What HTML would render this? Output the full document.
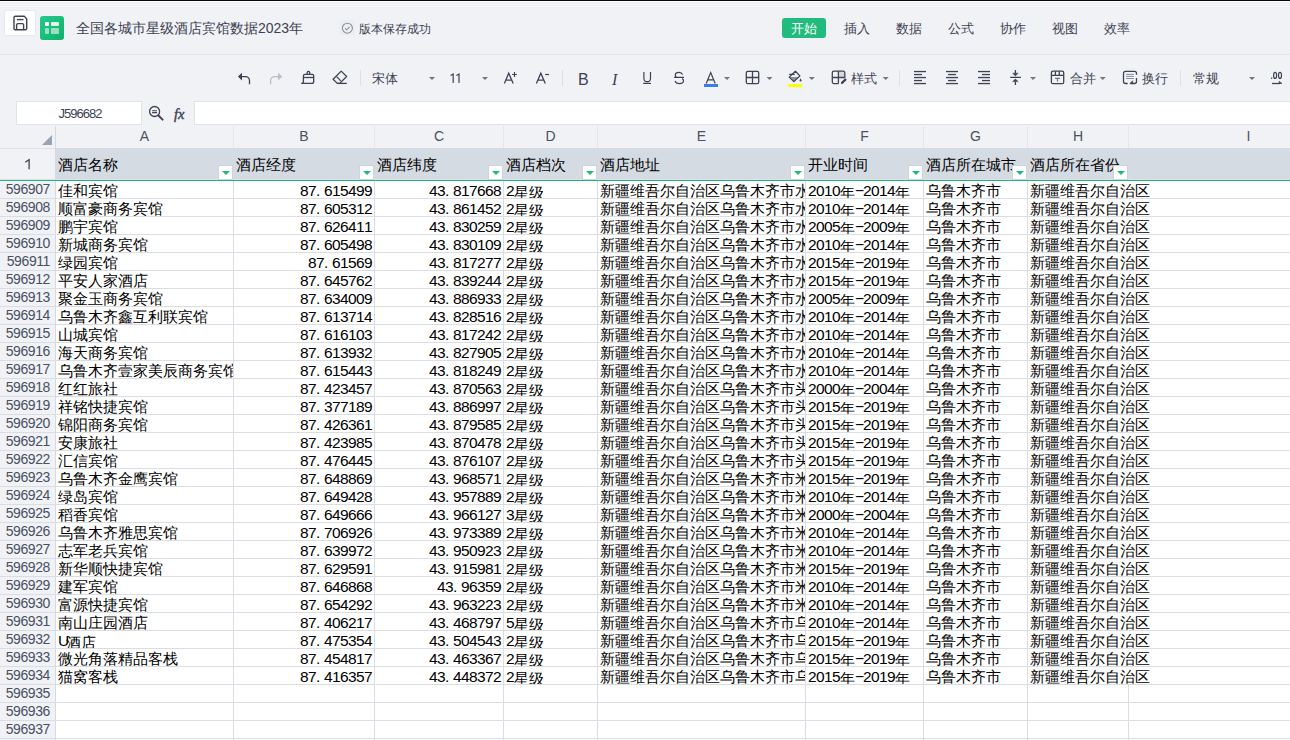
<!DOCTYPE html>
<html><head><meta charset="utf-8"><style>
*{margin:0;padding:0;box-sizing:border-box}
html,body{width:1290px;height:740px;overflow:hidden}
body{position:relative;background:#f1f2f6;font-family:"Liberation Sans",sans-serif;color:#3d4352}
.abs{position:absolute}
#topline{position:absolute;left:0;top:0;width:1290px;height:1px;background:#080808}
#topline2{position:absolute;left:0;top:1px;width:1290px;height:1px;background:#fff}
#savebtn{position:absolute;left:4px;top:10px;width:32px;height:26px;background:#fff;border:1px solid #e6e8ed;border-radius:3px}
#logo{position:absolute;left:40px;top:16px;width:24px;height:24px;border-radius:3px;background:linear-gradient(135deg,#25c98a,#10b06c)}
#title{position:absolute;left:76px;top:18px;font-size:14px;line-height:20px;color:#3b4150;white-space:nowrap}
#status{position:absolute;left:359px;top:20px;font-size:12px;line-height:18px;color:#3d4352;white-space:nowrap}
.tab{position:absolute;top:18px;height:20px;font-size:12.5px;line-height:22px;color:#3d4352;white-space:nowrap}
.tab.on{background:#21bc7d;color:#fff;border-radius:3px;width:44px;text-align:center;line-height:23px}
#sep1{position:absolute;left:0;top:54px;width:1290px;height:1px;background:#e1e4ea}
.tb{position:absolute;top:71px}
.tt{position:absolute;top:70px;font-size:12.5px;line-height:19px;color:#3d4352;white-space:nowrap}
.dd{position:absolute;top:77px;width:0;height:0;border-left:4px solid transparent;border-right:4px solid transparent;border-top:4px solid #8c929e}
.vsep{position:absolute;top:70px;width:1px;height:16px;background:#dde0e6}
#namebox{position:absolute;left:16px;top:101px;width:126px;height:24px;background:#fff;border:1px solid #dfe3ea;font-size:13px;line-height:23px;text-align:center;color:#3d4352;padding-left:2px;letter-spacing:-1px}
#fbox{position:absolute;left:194px;top:101px;width:1100px;height:24px;background:#fff;border:1px solid #dfe3ea}
#fx{position:absolute;left:174px;top:105px;font-family:"Liberation Serif",serif;font-style:italic;font-size:14.5px;line-height:18px;color:#3d4352;-webkit-text-stroke:0.4px #3d4352}
#grid{position:absolute;left:0;top:0;width:1290px;height:740px}
#colhbar{position:absolute;left:0;top:125px;width:1290px;height:23px;background:#f1f2f6}
.colh{position:absolute;top:125px;height:23px;font-size:14px;line-height:23px;text-align:center;color:#4b5160}
.colsep{position:absolute;top:126px;width:1px;height:22px;background:#e3e6eb}
#hrow{position:absolute;left:56px;top:148px;width:1234px;height:31px;background:#d5dbe3}
#hrowl{position:absolute;left:0;top:179px;width:1290px;height:1px;background:#e2dfea}
#green{position:absolute;left:0;top:180px;width:1290px;height:1px;background:#21b67a}
#white{position:absolute;left:56px;top:181px;width:1234px;height:559px;background:#fff}
#rhcol{position:absolute;left:0;top:148px;width:55px;height:592px;background:#f1f2f6}
#rhline{position:absolute;left:55px;top:126px;width:1px;height:614px;background:#d5d9e0}
#rh1{position:absolute;left:0;top:149px;width:55px;height:31px;font-size:14px;line-height:31px;text-align:center;color:#3d4352}
#corner{position:absolute;left:42px;top:135px;width:0;height:0;border-left:10px solid transparent;border-bottom:10px solid #9aa3b1}
.hc{position:absolute;top:153px;height:26px;font-family:"Liberation Mono",monospace;font-size:15px;line-height:28px;color:#000;padding-left:2px;white-space:nowrap;overflow:hidden}
.hsep{display:none}
.fb{position:absolute;top:166px;width:13px;height:13px;background:#fff;box-shadow:0 0 0 1px #cfd4dc}
.fb i{position:absolute;left:2.5px;top:5px;width:0;height:0;border-left:4px solid transparent;border-right:4px solid transparent;border-top:4px solid #22b97a}
.hl{position:absolute;left:0;width:1290px;height:1px;background:#dadde3}
.vl{position:absolute;width:1px;background:#dadde3}
.rh{position:absolute;left:0;width:55px;height:17px;font-size:14px;line-height:16px;text-align:right;padding-right:5px;color:#485061;letter-spacing:-0.4px}
.c{position:absolute;height:17px;font-family:"Liberation Mono",monospace;font-size:15px;line-height:17px;color:#000;white-space:nowrap;padding:3px 2px 0}
.c.clip{overflow:hidden}
.c.r{text-align:right}
b{display:inline-block;width:8px;text-align:left;font-weight:normal;font-family:"Liberation Sans",sans-serif;font-size:15.5px;position:relative;top:-2px}

</style></head><body>
<div id="topline"></div><div id="topline2"></div>
<div id="savebtn"></div>
<svg class="abs" style="left:0;top:0" width="1290" height="125" viewBox="0 0 1290 125" fill="none" stroke="#3d4352" stroke-width="1.3">
<!-- save icon -->
<path d="M14 17.5a1.2 1.2 0 0 1 1.2-1.2h9l2.5 2.5v9.7a1.2 1.2 0 0 1-1.2 1.2H15.2a1.2 1.2 0 0 1-1.2-1.2z" stroke-width="1.4"/>
<path d="M17 19.6h6.5" stroke-width="1.4"/>
<path d="M16.6 29.5v-4.6a1.3 1.3 0 0 1 1.3-1.3h4.4a1.3 1.3 0 0 1 1.3 1.3v4.6" stroke-width="1.4"/>
<!-- status check -->
<rect x="339.5" y="20" width="15.5" height="15.5" rx="2" fill="#eceef2" stroke="none"/>
<circle cx="347.4" cy="28.2" r="5" stroke="#8a909c" stroke-width="1.1"/>
<path d="M345 28.3l1.6 1.5 2.9-2.9" stroke="#8a909c" stroke-width="1.1"/>
<!-- undo / redo -->
<path d="M241.5 76.6H245.5A4 4 0 0 1 249.5 80.6V84.2"/>
<path d="M237.9 76.6L242 72.8V80.4Z" fill="#3d4352" stroke="none"/>
<path d="M278.6 76.6H274.6A4 4 0 0 0 270.6 80.6V84.2" stroke="#b9bdc6"/>
<path d="M282.2 76.6L278.1 72.8V80.4Z" fill="#b9bdc6" stroke="none"/>
<!-- brush -->
<path d="M307.2 74.4V72.6a1.25 1.25 0 0 1 2.5 0V74.4"/>
<path d="M301.2 83.4H311.7a2 2 0 0 0 2-2V75.9a1.5 1.5 0 0 0-1.5-1.5H304.9a1.5 1.5 0 0 0-1.5 1.5V81.4a2 2 0 0 1-2.2 2"/>
<path d="M303.4 77.5H313.7"/>
<!-- eraser -->
<path d="M337.3 83.4L333.1 79.2L341.2 71.1L346.6 76.5L339.7 83.4Z" stroke-linejoin="round"/>
<path d="M336.6 76.6L340.8 80.9"/>
<path d="M337.3 83.4H346.8"/>
<path d="M450.6 75.6L453.2 74V83.1M456.4 75.6L459 74V83.1" stroke-width="1.2"/>
<!-- A+ A- -->
<path d="M504.4 83.6L508.7 73.2L513.2 83.6M506 80.1H511.6" stroke-width="1.3"/>
<path d="M512.1 74.5H516.9M514.5 72.1V76.9" stroke-width="1.2"/>
<path d="M536.4 83.6L540.8 73.2L545.3 83.6M538 80.1H543.7" stroke-width="1.3"/>
<path d="M545.2 74.5H549.1" stroke-width="1.2"/>
<path d="M643.9 72.1V78.2a3.3 3.5 0 0 0 6.6 0V72.1M643.2 83.4H650.9" stroke-width="1.2"/>
<path d="M682.6 74.6C681.9 73 680.6 72.3 679.1 72.3C677 72.3 675.3 73.5 675.3 75C675.3 76 675.8 76.8 676.6 77.3M682.2 78.4C683 79 683.5 80 683.5 80.8C683.5 82.5 681.7 83.6 679.3 83.6C677.2 83.6 675.6 82.6 675 81M674 77.3H684" stroke-width="1.2"/>
<!-- font color A -->
<path d="M706.2 83.4L710.7 72.5L715.2 83.4M707.9 79.8H713.5" stroke-width="1.2"/>
<rect x="704" y="84" width="14" height="3" fill="#3b7bf0" stroke="none"/>
<!-- border grid -->
<rect x="746.3" y="71.4" width="12.4" height="12.3" rx="1.5"/>
<path d="M752.5 71.4V83.7M746.3 77.5H758.7"/>
<!-- bucket -->
<path d="M789.6 76.9H799.4L793.9 81.6Z" fill="#8a93a2" stroke="none"/>
<path d="M795.4 71.2L799.9 75.9L793.9 81.6L789.2 77.1Z" stroke-linejoin="round"/>
<path d="M789.2 74.4H794.7"/>
<path d="M800.6 78.2L799.5 80.4a1.1 1.1 0 0 0 2.2 0Z" fill="#3d4352" stroke="none"/>
<rect x="788" y="84" width="14" height="3" fill="#ffff00" stroke="none"/>
<!-- styles -->
<rect x="839" y="72" width="5.2" height="5" fill="#d5d9e0" stroke="none"/>
<path d="M838.4 83.6H833.8a1.5 1.5 0 0 1-1.5-1.5V72.7a1.5 1.5 0 0 1 1.5-1.5H843.3a1.5 1.5 0 0 1 1.5 1.5V77.5H832.3M838.4 71.2V83.6"/>
<path d="M842 82.9L845.4 79.6" stroke-width="2.2" stroke-linecap="round"/>
<!-- align -->
<g fill="#3d4352" stroke="none">
<rect x="914" y="70.9" width="12" height="1.3"/><rect x="914" y="73.9" width="8" height="1.3"/><rect x="914" y="76.9" width="12" height="1.3"/><rect x="914" y="79.9" width="8" height="1.3"/><rect x="914" y="82.9" width="12" height="1.3"/>
<rect x="946" y="70.9" width="12" height="1.3"/><rect x="948" y="73.9" width="8" height="1.3"/><rect x="946" y="76.9" width="12" height="1.3"/><rect x="948" y="79.9" width="8" height="1.3"/><rect x="946" y="82.9" width="12" height="1.3"/>
<rect x="978" y="70.9" width="12" height="1.3"/><rect x="982" y="73.9" width="8" height="1.3"/><rect x="978" y="76.9" width="12" height="1.3"/><rect x="982" y="79.9" width="8" height="1.3"/><rect x="978" y="82.9" width="12" height="1.3"/>
</g>
<!-- valign -->
<path d="M1010.2 77.4H1020.9M1015.4 70V73.5M1015.4 81.3V85"/>
<path d="M1012.6 73.2H1018.2L1015.4 75.9Z M1012.6 81.6H1018.2L1015.4 78.9Z" fill="#3d4352" stroke="#3d4352" stroke-width="0.5" stroke-linejoin="round"/>
<!-- merge -->
<rect x="1051.4" y="71.2" width="12.3" height="12.5" rx="1.5"/>
<path d="M1051.4 75.4H1063.7M1055.4 71.2V75.4M1059.3 71.2V75.4"/>
<path d="M1055.1 78.3H1060M1057.5 78.3V81.6" stroke="#6f7582" stroke-width="1.2"/>
<!-- wrap -->
<path d="M1136.5 74.8V73.4a2 2 0 0 0-2-2H1125.5a2 2 0 0 0-2 2V81.5a2 2 0 0 0 2 2H1127.7M1136.5 78V81.5a2 2 0 0 1-2 2H1131"/>
<path d="M1129.8 83.6L1132.6 80.9V83.6Z" fill="#3d4352" stroke="#3d4352" stroke-width="0.8"/>
<path d="M1126.1 74.4H1133.9M1126.1 76.4H1133.9M1126.1 78.5H1133.9" stroke="#8a909c" stroke-width="1"/>
<!-- .00 -->
<circle cx="1271.6" cy="78.3" r="0.8" fill="#3d4352" stroke="none"/>
<ellipse cx="1275.1" cy="75.4" rx="1.5" ry="3" stroke-width="1.2"/>
<ellipse cx="1280" cy="75.4" rx="1.5" ry="3" stroke-width="1.2"/>
<path d="M1272 83.5H1280"/>
<path d="M1279.2 81.3L1282 83.5H1279.2Z" fill="#3d4352" stroke="#3d4352" stroke-width="0.6"/>
<!-- magnifier -->
<circle cx="154.6" cy="111.5" r="5"/>
<path d="M152.1 110.75H157M152.1 112.6H157" stroke-width="1.1"/>
<path d="M158.7 115.8L162.6 119.6" stroke-width="2" stroke-linecap="round"/>
<!-- separators -->
<path d="M360.5 70V86M562.5 70V86M899.5 70V86M1180.5 70V86" stroke="#dde0e6" stroke-width="1"/>
<!-- dropdown triangles -->
<g fill="#70757f" stroke="none">
<path d="M429 77H435L432 80Z"/><path d="M482 77H488L485 80Z"/><path d="M724 77H730L727 80Z"/><path d="M766.5 77H772.5L769.5 80Z"/>
<path d="M808.8 77H814.8L811.8 80Z"/><path d="M882.7 77H888.7L885.7 80Z"/><path d="M1030 77H1036L1033 80Z"/><path d="M1099.8 77H1105.8L1102.8 80Z"/><path d="M1249 77H1255L1252 80Z"/>
</g>
</svg>
<div id="logo"></div>
<svg class="abs" style="left:40px;top:16px" width="24" height="24" viewBox="0 0 24 24">
<rect x="5" y="6" width="4" height="4" rx="1" fill="#fff"/><rect x="11" y="6" width="8" height="4" rx="1" fill="#fff" opacity=".85"/>
<rect x="5" y="12" width="4" height="6" rx="1" fill="#fff" opacity=".55"/><rect x="11" y="12" width="8" height="6" rx="1" fill="#fff" opacity=".55"/></svg>
<div id="title">全国各城市星级酒店宾馆数据2023年</div>
<div id="status">版本保存成功</div>
<div class="tab on" style="left:782px">开始</div>
<div class="tab" style="left:844px">插入</div>
<div class="tab" style="left:896px">数据</div>
<div class="tab" style="left:948px">公式</div>
<div class="tab" style="left:1000px">协作</div>
<div class="tab" style="left:1052px">视图</div>
<div class="tab" style="left:1104px">效率</div>
<div id="sep1"></div>
<!-- toolbar text -->
<div class="tt" style="left:372px">宋体</div>
<div class="tt" style="left:578px;font-size:16px;top:70px">B</div>
<div class="tt" style="left:612px;font-size:16px;top:70px;font-family:'Liberation Serif',serif;font-style:italic">I</div>
<div class="tt" style="left:851px">样式</div>
<div class="tt" style="left:1070px">合并</div>
<div class="tt" style="left:1142px">换行</div>
<div class="tt" style="left:1193px">常规</div>
<!-- formula bar -->
<div id="namebox">J596682</div>
<div id="fx">fx</div>
<div id="fbox"></div>
<!-- col header / row header bars -->
<div id="colhbar"></div>
<div id="rhcol"></div>
<div id="white"></div>
<div id="hrow"></div>
<div id="hrowl"></div>
<div id="rhline"></div>
<div id="green"></div>
<div class="abs" style="left:0;top:148px;width:55px;height:1px;background:#dfe2e8"></div>
<svg class="abs" style="left:0;top:150px" width="55" height="30" viewBox="0 150 55 30"><path d="M25.2 162.2L29.1 159.6V169.2" fill="none" stroke="#3d4352" stroke-width="1.3"/></svg>
<div id="corner"></div>

<div id="grid">
<div class="colh" style="left:56px;width:177px">A</div>
<div class="colh" style="left:234px;width:140px">B</div>
<div class="colsep" style="left:233px"></div>
<div class="colh" style="left:375px;width:128px">C</div>
<div class="colsep" style="left:374px"></div>
<div class="colh" style="left:504px;width:93px">D</div>
<div class="colsep" style="left:503px"></div>
<div class="colh" style="left:598px;width:207px">E</div>
<div class="colsep" style="left:597px"></div>
<div class="colh" style="left:806px;width:117px">F</div>
<div class="colsep" style="left:805px"></div>
<div class="colh" style="left:924px;width:103px">G</div>
<div class="colsep" style="left:923px"></div>
<div class="colh" style="left:1028px;width:100px">H</div>
<div class="colsep" style="left:1027px"></div>
<div class="colh" style="left:1129px;width:239px">I</div>
<div class="colsep" style="left:1128px"></div>
<div class="hc" style="left:56px;width:177px">酒店名称</div>
<div class="hsep" style="left:233px"></div>
<div class="fb" style="left:219px"><i></i></div>
<div class="hc" style="left:234px;width:140px">酒店经度</div>
<div class="hsep" style="left:374px"></div>
<div class="fb" style="left:360px"><i></i></div>
<div class="hc" style="left:375px;width:128px">酒店纬度</div>
<div class="hsep" style="left:503px"></div>
<div class="fb" style="left:489px"><i></i></div>
<div class="hc" style="left:504px;width:93px">酒店档次</div>
<div class="hsep" style="left:597px"></div>
<div class="fb" style="left:583px"><i></i></div>
<div class="hc" style="left:598px;width:207px">酒店地址</div>
<div class="hsep" style="left:805px"></div>
<div class="fb" style="left:791px"><i></i></div>
<div class="hc" style="left:806px;width:117px">开业时间</div>
<div class="hsep" style="left:923px"></div>
<div class="fb" style="left:909px"><i></i></div>
<div class="hc" style="left:924px;width:103px">酒店所在城市</div>
<div class="hsep" style="left:1027px"></div>
<div class="fb" style="left:1013px"><i></i></div>
<div class="hc" style="left:1028px;width:100px">酒店所在省份</div>
<div class="hsep" style="left:1128px"></div>
<div class="fb" style="left:1114px"><i></i></div>
<div class="hl" style="top:198px"></div>
<div class="hl" style="top:216px"></div>
<div class="hl" style="top:234px"></div>
<div class="hl" style="top:252px"></div>
<div class="hl" style="top:270px"></div>
<div class="hl" style="top:288px"></div>
<div class="hl" style="top:306px"></div>
<div class="hl" style="top:324px"></div>
<div class="hl" style="top:342px"></div>
<div class="hl" style="top:360px"></div>
<div class="hl" style="top:378px"></div>
<div class="hl" style="top:396px"></div>
<div class="hl" style="top:414px"></div>
<div class="hl" style="top:432px"></div>
<div class="hl" style="top:450px"></div>
<div class="hl" style="top:468px"></div>
<div class="hl" style="top:486px"></div>
<div class="hl" style="top:504px"></div>
<div class="hl" style="top:522px"></div>
<div class="hl" style="top:540px"></div>
<div class="hl" style="top:558px"></div>
<div class="hl" style="top:576px"></div>
<div class="hl" style="top:594px"></div>
<div class="hl" style="top:612px"></div>
<div class="hl" style="top:630px"></div>
<div class="hl" style="top:648px"></div>
<div class="hl" style="top:666px"></div>
<div class="hl" style="top:684px"></div>
<div class="hl" style="top:702px"></div>
<div class="hl" style="top:720px"></div>
<div class="hl" style="top:738px"></div>
<div class="vl" style="left:233px;top:181px;height:559px"></div>
<div class="vl" style="left:374px;top:181px;height:559px"></div>
<div class="vl" style="left:503px;top:181px;height:559px"></div>
<div class="vl" style="left:597px;top:181px;height:559px"></div>
<div class="vl" style="left:805px;top:181px;height:559px"></div>
<div class="vl" style="left:923px;top:181px;height:559px"></div>
<div class="vl" style="left:1027px;top:181px;height:559px"></div>
<div class="vl" style="left:1128px;top:685px;height:55px"></div>
<div class="rh" style="top:181px">596907</div>
<div class="c l clip" style="top:181px;left:56px;width:177px">佳和宾馆</div>
<div class="c r clip" style="top:181px;left:234px;width:140px"><b>8</b><b>7</b><b>.</b><b>6</b><b>1</b><b>5</b><b>4</b><b>9</b><b>9</b></div>
<div class="c r clip" style="top:181px;left:375px;width:128px"><b>4</b><b>3</b><b>.</b><b>8</b><b>1</b><b>7</b><b>6</b><b>6</b><b>8</b></div>
<div class="c l clip" style="top:181px;left:504px;width:93px"><b>2</b>星级</div>
<div class="c l clip" style="top:181px;left:598px;width:207px">新疆维吾尔自治区乌鲁木齐市水</div>
<div class="c l clip" style="top:181px;left:806px;width:117px"><b>2</b><b>0</b><b>1</b><b>0</b>年<b>−</b><b>2</b><b>0</b><b>1</b><b>4</b>年</div>
<div class="c l clip" style="top:181px;left:924px;width:103px">乌鲁木齐市</div>
<div class="c l" style="top:181px;left:1028px;width:200px">新疆维吾尔自治区</div>
<div class="rh" style="top:199px">596908</div>
<div class="c l clip" style="top:199px;left:56px;width:177px">顺富豪商务宾馆</div>
<div class="c r clip" style="top:199px;left:234px;width:140px"><b>8</b><b>7</b><b>.</b><b>6</b><b>0</b><b>5</b><b>3</b><b>1</b><b>2</b></div>
<div class="c r clip" style="top:199px;left:375px;width:128px"><b>4</b><b>3</b><b>.</b><b>8</b><b>6</b><b>1</b><b>4</b><b>5</b><b>2</b></div>
<div class="c l clip" style="top:199px;left:504px;width:93px"><b>2</b>星级</div>
<div class="c l clip" style="top:199px;left:598px;width:207px">新疆维吾尔自治区乌鲁木齐市水</div>
<div class="c l clip" style="top:199px;left:806px;width:117px"><b>2</b><b>0</b><b>1</b><b>0</b>年<b>−</b><b>2</b><b>0</b><b>1</b><b>4</b>年</div>
<div class="c l clip" style="top:199px;left:924px;width:103px">乌鲁木齐市</div>
<div class="c l" style="top:199px;left:1028px;width:200px">新疆维吾尔自治区</div>
<div class="rh" style="top:217px">596909</div>
<div class="c l clip" style="top:217px;left:56px;width:177px">鹏宇宾馆</div>
<div class="c r clip" style="top:217px;left:234px;width:140px"><b>8</b><b>7</b><b>.</b><b>6</b><b>2</b><b>6</b><b>4</b><b>1</b><b>1</b></div>
<div class="c r clip" style="top:217px;left:375px;width:128px"><b>4</b><b>3</b><b>.</b><b>8</b><b>3</b><b>0</b><b>2</b><b>5</b><b>9</b></div>
<div class="c l clip" style="top:217px;left:504px;width:93px"><b>2</b>星级</div>
<div class="c l clip" style="top:217px;left:598px;width:207px">新疆维吾尔自治区乌鲁木齐市水</div>
<div class="c l clip" style="top:217px;left:806px;width:117px"><b>2</b><b>0</b><b>0</b><b>5</b>年<b>−</b><b>2</b><b>0</b><b>0</b><b>9</b>年</div>
<div class="c l clip" style="top:217px;left:924px;width:103px">乌鲁木齐市</div>
<div class="c l" style="top:217px;left:1028px;width:200px">新疆维吾尔自治区</div>
<div class="rh" style="top:235px">596910</div>
<div class="c l clip" style="top:235px;left:56px;width:177px">新城商务宾馆</div>
<div class="c r clip" style="top:235px;left:234px;width:140px"><b>8</b><b>7</b><b>.</b><b>6</b><b>0</b><b>5</b><b>4</b><b>9</b><b>8</b></div>
<div class="c r clip" style="top:235px;left:375px;width:128px"><b>4</b><b>3</b><b>.</b><b>8</b><b>3</b><b>0</b><b>1</b><b>0</b><b>9</b></div>
<div class="c l clip" style="top:235px;left:504px;width:93px"><b>2</b>星级</div>
<div class="c l clip" style="top:235px;left:598px;width:207px">新疆维吾尔自治区乌鲁木齐市水</div>
<div class="c l clip" style="top:235px;left:806px;width:117px"><b>2</b><b>0</b><b>1</b><b>0</b>年<b>−</b><b>2</b><b>0</b><b>1</b><b>4</b>年</div>
<div class="c l clip" style="top:235px;left:924px;width:103px">乌鲁木齐市</div>
<div class="c l" style="top:235px;left:1028px;width:200px">新疆维吾尔自治区</div>
<div class="rh" style="top:253px">596911</div>
<div class="c l clip" style="top:253px;left:56px;width:177px">绿园宾馆</div>
<div class="c r clip" style="top:253px;left:234px;width:140px"><b>8</b><b>7</b><b>.</b><b>6</b><b>1</b><b>5</b><b>6</b><b>9</b></div>
<div class="c r clip" style="top:253px;left:375px;width:128px"><b>4</b><b>3</b><b>.</b><b>8</b><b>1</b><b>7</b><b>2</b><b>7</b><b>7</b></div>
<div class="c l clip" style="top:253px;left:504px;width:93px"><b>2</b>星级</div>
<div class="c l clip" style="top:253px;left:598px;width:207px">新疆维吾尔自治区乌鲁木齐市水</div>
<div class="c l clip" style="top:253px;left:806px;width:117px"><b>2</b><b>0</b><b>1</b><b>5</b>年<b>−</b><b>2</b><b>0</b><b>1</b><b>9</b>年</div>
<div class="c l clip" style="top:253px;left:924px;width:103px">乌鲁木齐市</div>
<div class="c l" style="top:253px;left:1028px;width:200px">新疆维吾尔自治区</div>
<div class="rh" style="top:271px">596912</div>
<div class="c l clip" style="top:271px;left:56px;width:177px">平安人家酒店</div>
<div class="c r clip" style="top:271px;left:234px;width:140px"><b>8</b><b>7</b><b>.</b><b>6</b><b>4</b><b>5</b><b>7</b><b>6</b><b>2</b></div>
<div class="c r clip" style="top:271px;left:375px;width:128px"><b>4</b><b>3</b><b>.</b><b>8</b><b>3</b><b>9</b><b>2</b><b>4</b><b>4</b></div>
<div class="c l clip" style="top:271px;left:504px;width:93px"><b>2</b>星级</div>
<div class="c l clip" style="top:271px;left:598px;width:207px">新疆维吾尔自治区乌鲁木齐市水</div>
<div class="c l clip" style="top:271px;left:806px;width:117px"><b>2</b><b>0</b><b>1</b><b>5</b>年<b>−</b><b>2</b><b>0</b><b>1</b><b>9</b>年</div>
<div class="c l clip" style="top:271px;left:924px;width:103px">乌鲁木齐市</div>
<div class="c l" style="top:271px;left:1028px;width:200px">新疆维吾尔自治区</div>
<div class="rh" style="top:289px">596913</div>
<div class="c l clip" style="top:289px;left:56px;width:177px">聚金玉商务宾馆</div>
<div class="c r clip" style="top:289px;left:234px;width:140px"><b>8</b><b>7</b><b>.</b><b>6</b><b>3</b><b>4</b><b>0</b><b>0</b><b>9</b></div>
<div class="c r clip" style="top:289px;left:375px;width:128px"><b>4</b><b>3</b><b>.</b><b>8</b><b>8</b><b>6</b><b>9</b><b>3</b><b>3</b></div>
<div class="c l clip" style="top:289px;left:504px;width:93px"><b>2</b>星级</div>
<div class="c l clip" style="top:289px;left:598px;width:207px">新疆维吾尔自治区乌鲁木齐市水</div>
<div class="c l clip" style="top:289px;left:806px;width:117px"><b>2</b><b>0</b><b>0</b><b>5</b>年<b>−</b><b>2</b><b>0</b><b>0</b><b>9</b>年</div>
<div class="c l clip" style="top:289px;left:924px;width:103px">乌鲁木齐市</div>
<div class="c l" style="top:289px;left:1028px;width:200px">新疆维吾尔自治区</div>
<div class="rh" style="top:307px">596914</div>
<div class="c l clip" style="top:307px;left:56px;width:177px">乌鲁木齐鑫互利联宾馆</div>
<div class="c r clip" style="top:307px;left:234px;width:140px"><b>8</b><b>7</b><b>.</b><b>6</b><b>1</b><b>3</b><b>7</b><b>1</b><b>4</b></div>
<div class="c r clip" style="top:307px;left:375px;width:128px"><b>4</b><b>3</b><b>.</b><b>8</b><b>2</b><b>8</b><b>5</b><b>1</b><b>6</b></div>
<div class="c l clip" style="top:307px;left:504px;width:93px"><b>2</b>星级</div>
<div class="c l clip" style="top:307px;left:598px;width:207px">新疆维吾尔自治区乌鲁木齐市水</div>
<div class="c l clip" style="top:307px;left:806px;width:117px"><b>2</b><b>0</b><b>1</b><b>0</b>年<b>−</b><b>2</b><b>0</b><b>1</b><b>4</b>年</div>
<div class="c l clip" style="top:307px;left:924px;width:103px">乌鲁木齐市</div>
<div class="c l" style="top:307px;left:1028px;width:200px">新疆维吾尔自治区</div>
<div class="rh" style="top:325px">596915</div>
<div class="c l clip" style="top:325px;left:56px;width:177px">山城宾馆</div>
<div class="c r clip" style="top:325px;left:234px;width:140px"><b>8</b><b>7</b><b>.</b><b>6</b><b>1</b><b>6</b><b>1</b><b>0</b><b>3</b></div>
<div class="c r clip" style="top:325px;left:375px;width:128px"><b>4</b><b>3</b><b>.</b><b>8</b><b>1</b><b>7</b><b>2</b><b>4</b><b>2</b></div>
<div class="c l clip" style="top:325px;left:504px;width:93px"><b>2</b>星级</div>
<div class="c l clip" style="top:325px;left:598px;width:207px">新疆维吾尔自治区乌鲁木齐市水</div>
<div class="c l clip" style="top:325px;left:806px;width:117px"><b>2</b><b>0</b><b>1</b><b>0</b>年<b>−</b><b>2</b><b>0</b><b>1</b><b>4</b>年</div>
<div class="c l clip" style="top:325px;left:924px;width:103px">乌鲁木齐市</div>
<div class="c l" style="top:325px;left:1028px;width:200px">新疆维吾尔自治区</div>
<div class="rh" style="top:343px">596916</div>
<div class="c l clip" style="top:343px;left:56px;width:177px">海天商务宾馆</div>
<div class="c r clip" style="top:343px;left:234px;width:140px"><b>8</b><b>7</b><b>.</b><b>6</b><b>1</b><b>3</b><b>9</b><b>3</b><b>2</b></div>
<div class="c r clip" style="top:343px;left:375px;width:128px"><b>4</b><b>3</b><b>.</b><b>8</b><b>2</b><b>7</b><b>9</b><b>0</b><b>5</b></div>
<div class="c l clip" style="top:343px;left:504px;width:93px"><b>2</b>星级</div>
<div class="c l clip" style="top:343px;left:598px;width:207px">新疆维吾尔自治区乌鲁木齐市水</div>
<div class="c l clip" style="top:343px;left:806px;width:117px"><b>2</b><b>0</b><b>1</b><b>0</b>年<b>−</b><b>2</b><b>0</b><b>1</b><b>4</b>年</div>
<div class="c l clip" style="top:343px;left:924px;width:103px">乌鲁木齐市</div>
<div class="c l" style="top:343px;left:1028px;width:200px">新疆维吾尔自治区</div>
<div class="rh" style="top:361px">596917</div>
<div class="c l clip" style="top:361px;left:56px;width:177px">乌鲁木齐壹家美辰商务宾馆</div>
<div class="c r clip" style="top:361px;left:234px;width:140px"><b>8</b><b>7</b><b>.</b><b>6</b><b>1</b><b>5</b><b>4</b><b>4</b><b>3</b></div>
<div class="c r clip" style="top:361px;left:375px;width:128px"><b>4</b><b>3</b><b>.</b><b>8</b><b>1</b><b>8</b><b>2</b><b>4</b><b>9</b></div>
<div class="c l clip" style="top:361px;left:504px;width:93px"><b>2</b>星级</div>
<div class="c l clip" style="top:361px;left:598px;width:207px">新疆维吾尔自治区乌鲁木齐市水</div>
<div class="c l clip" style="top:361px;left:806px;width:117px"><b>2</b><b>0</b><b>1</b><b>0</b>年<b>−</b><b>2</b><b>0</b><b>1</b><b>4</b>年</div>
<div class="c l clip" style="top:361px;left:924px;width:103px">乌鲁木齐市</div>
<div class="c l" style="top:361px;left:1028px;width:200px">新疆维吾尔自治区</div>
<div class="rh" style="top:379px">596918</div>
<div class="c l clip" style="top:379px;left:56px;width:177px">红红旅社</div>
<div class="c r clip" style="top:379px;left:234px;width:140px"><b>8</b><b>7</b><b>.</b><b>4</b><b>2</b><b>3</b><b>4</b><b>5</b><b>7</b></div>
<div class="c r clip" style="top:379px;left:375px;width:128px"><b>4</b><b>3</b><b>.</b><b>8</b><b>7</b><b>0</b><b>5</b><b>6</b><b>3</b></div>
<div class="c l clip" style="top:379px;left:504px;width:93px"><b>2</b>星级</div>
<div class="c l clip" style="top:379px;left:598px;width:207px">新疆维吾尔自治区乌鲁木齐市头</div>
<div class="c l clip" style="top:379px;left:806px;width:117px"><b>2</b><b>0</b><b>0</b><b>0</b>年<b>−</b><b>2</b><b>0</b><b>0</b><b>4</b>年</div>
<div class="c l clip" style="top:379px;left:924px;width:103px">乌鲁木齐市</div>
<div class="c l" style="top:379px;left:1028px;width:200px">新疆维吾尔自治区</div>
<div class="rh" style="top:397px">596919</div>
<div class="c l clip" style="top:397px;left:56px;width:177px">祥铭快捷宾馆</div>
<div class="c r clip" style="top:397px;left:234px;width:140px"><b>8</b><b>7</b><b>.</b><b>3</b><b>7</b><b>7</b><b>1</b><b>8</b><b>9</b></div>
<div class="c r clip" style="top:397px;left:375px;width:128px"><b>4</b><b>3</b><b>.</b><b>8</b><b>8</b><b>6</b><b>9</b><b>9</b><b>7</b></div>
<div class="c l clip" style="top:397px;left:504px;width:93px"><b>2</b>星级</div>
<div class="c l clip" style="top:397px;left:598px;width:207px">新疆维吾尔自治区乌鲁木齐市头</div>
<div class="c l clip" style="top:397px;left:806px;width:117px"><b>2</b><b>0</b><b>1</b><b>5</b>年<b>−</b><b>2</b><b>0</b><b>1</b><b>9</b>年</div>
<div class="c l clip" style="top:397px;left:924px;width:103px">乌鲁木齐市</div>
<div class="c l" style="top:397px;left:1028px;width:200px">新疆维吾尔自治区</div>
<div class="rh" style="top:415px">596920</div>
<div class="c l clip" style="top:415px;left:56px;width:177px">锦阳商务宾馆</div>
<div class="c r clip" style="top:415px;left:234px;width:140px"><b>8</b><b>7</b><b>.</b><b>4</b><b>2</b><b>6</b><b>3</b><b>6</b><b>1</b></div>
<div class="c r clip" style="top:415px;left:375px;width:128px"><b>4</b><b>3</b><b>.</b><b>8</b><b>7</b><b>9</b><b>5</b><b>8</b><b>5</b></div>
<div class="c l clip" style="top:415px;left:504px;width:93px"><b>2</b>星级</div>
<div class="c l clip" style="top:415px;left:598px;width:207px">新疆维吾尔自治区乌鲁木齐市头</div>
<div class="c l clip" style="top:415px;left:806px;width:117px"><b>2</b><b>0</b><b>1</b><b>5</b>年<b>−</b><b>2</b><b>0</b><b>1</b><b>9</b>年</div>
<div class="c l clip" style="top:415px;left:924px;width:103px">乌鲁木齐市</div>
<div class="c l" style="top:415px;left:1028px;width:200px">新疆维吾尔自治区</div>
<div class="rh" style="top:433px">596921</div>
<div class="c l clip" style="top:433px;left:56px;width:177px">安康旅社</div>
<div class="c r clip" style="top:433px;left:234px;width:140px"><b>8</b><b>7</b><b>.</b><b>4</b><b>2</b><b>3</b><b>9</b><b>8</b><b>5</b></div>
<div class="c r clip" style="top:433px;left:375px;width:128px"><b>4</b><b>3</b><b>.</b><b>8</b><b>7</b><b>0</b><b>4</b><b>7</b><b>8</b></div>
<div class="c l clip" style="top:433px;left:504px;width:93px"><b>2</b>星级</div>
<div class="c l clip" style="top:433px;left:598px;width:207px">新疆维吾尔自治区乌鲁木齐市头</div>
<div class="c l clip" style="top:433px;left:806px;width:117px"><b>2</b><b>0</b><b>1</b><b>5</b>年<b>−</b><b>2</b><b>0</b><b>1</b><b>9</b>年</div>
<div class="c l clip" style="top:433px;left:924px;width:103px">乌鲁木齐市</div>
<div class="c l" style="top:433px;left:1028px;width:200px">新疆维吾尔自治区</div>
<div class="rh" style="top:451px">596922</div>
<div class="c l clip" style="top:451px;left:56px;width:177px">汇信宾馆</div>
<div class="c r clip" style="top:451px;left:234px;width:140px"><b>8</b><b>7</b><b>.</b><b>4</b><b>7</b><b>6</b><b>4</b><b>4</b><b>5</b></div>
<div class="c r clip" style="top:451px;left:375px;width:128px"><b>4</b><b>3</b><b>.</b><b>8</b><b>7</b><b>6</b><b>1</b><b>0</b><b>7</b></div>
<div class="c l clip" style="top:451px;left:504px;width:93px"><b>2</b>星级</div>
<div class="c l clip" style="top:451px;left:598px;width:207px">新疆维吾尔自治区乌鲁木齐市头</div>
<div class="c l clip" style="top:451px;left:806px;width:117px"><b>2</b><b>0</b><b>1</b><b>5</b>年<b>−</b><b>2</b><b>0</b><b>1</b><b>9</b>年</div>
<div class="c l clip" style="top:451px;left:924px;width:103px">乌鲁木齐市</div>
<div class="c l" style="top:451px;left:1028px;width:200px">新疆维吾尔自治区</div>
<div class="rh" style="top:469px">596923</div>
<div class="c l clip" style="top:469px;left:56px;width:177px">乌鲁木齐金鹰宾馆</div>
<div class="c r clip" style="top:469px;left:234px;width:140px"><b>8</b><b>7</b><b>.</b><b>6</b><b>4</b><b>8</b><b>8</b><b>6</b><b>9</b></div>
<div class="c r clip" style="top:469px;left:375px;width:128px"><b>4</b><b>3</b><b>.</b><b>9</b><b>6</b><b>8</b><b>5</b><b>7</b><b>1</b></div>
<div class="c l clip" style="top:469px;left:504px;width:93px"><b>2</b>星级</div>
<div class="c l clip" style="top:469px;left:598px;width:207px">新疆维吾尔自治区乌鲁木齐市米</div>
<div class="c l clip" style="top:469px;left:806px;width:117px"><b>2</b><b>0</b><b>1</b><b>5</b>年<b>−</b><b>2</b><b>0</b><b>1</b><b>9</b>年</div>
<div class="c l clip" style="top:469px;left:924px;width:103px">乌鲁木齐市</div>
<div class="c l" style="top:469px;left:1028px;width:200px">新疆维吾尔自治区</div>
<div class="rh" style="top:487px">596924</div>
<div class="c l clip" style="top:487px;left:56px;width:177px">绿岛宾馆</div>
<div class="c r clip" style="top:487px;left:234px;width:140px"><b>8</b><b>7</b><b>.</b><b>6</b><b>4</b><b>9</b><b>4</b><b>2</b><b>8</b></div>
<div class="c r clip" style="top:487px;left:375px;width:128px"><b>4</b><b>3</b><b>.</b><b>9</b><b>5</b><b>7</b><b>8</b><b>8</b><b>9</b></div>
<div class="c l clip" style="top:487px;left:504px;width:93px"><b>2</b>星级</div>
<div class="c l clip" style="top:487px;left:598px;width:207px">新疆维吾尔自治区乌鲁木齐市米</div>
<div class="c l clip" style="top:487px;left:806px;width:117px"><b>2</b><b>0</b><b>1</b><b>0</b>年<b>−</b><b>2</b><b>0</b><b>1</b><b>4</b>年</div>
<div class="c l clip" style="top:487px;left:924px;width:103px">乌鲁木齐市</div>
<div class="c l" style="top:487px;left:1028px;width:200px">新疆维吾尔自治区</div>
<div class="rh" style="top:505px">596925</div>
<div class="c l clip" style="top:505px;left:56px;width:177px">稻香宾馆</div>
<div class="c r clip" style="top:505px;left:234px;width:140px"><b>8</b><b>7</b><b>.</b><b>6</b><b>4</b><b>9</b><b>6</b><b>6</b><b>6</b></div>
<div class="c r clip" style="top:505px;left:375px;width:128px"><b>4</b><b>3</b><b>.</b><b>9</b><b>6</b><b>6</b><b>1</b><b>2</b><b>7</b></div>
<div class="c l clip" style="top:505px;left:504px;width:93px"><b>3</b>星级</div>
<div class="c l clip" style="top:505px;left:598px;width:207px">新疆维吾尔自治区乌鲁木齐市米</div>
<div class="c l clip" style="top:505px;left:806px;width:117px"><b>2</b><b>0</b><b>0</b><b>0</b>年<b>−</b><b>2</b><b>0</b><b>0</b><b>4</b>年</div>
<div class="c l clip" style="top:505px;left:924px;width:103px">乌鲁木齐市</div>
<div class="c l" style="top:505px;left:1028px;width:200px">新疆维吾尔自治区</div>
<div class="rh" style="top:523px">596926</div>
<div class="c l clip" style="top:523px;left:56px;width:177px">乌鲁木齐雅思宾馆</div>
<div class="c r clip" style="top:523px;left:234px;width:140px"><b>8</b><b>7</b><b>.</b><b>7</b><b>0</b><b>6</b><b>9</b><b>2</b><b>6</b></div>
<div class="c r clip" style="top:523px;left:375px;width:128px"><b>4</b><b>3</b><b>.</b><b>9</b><b>7</b><b>3</b><b>3</b><b>8</b><b>9</b></div>
<div class="c l clip" style="top:523px;left:504px;width:93px"><b>2</b>星级</div>
<div class="c l clip" style="top:523px;left:598px;width:207px">新疆维吾尔自治区乌鲁木齐市米</div>
<div class="c l clip" style="top:523px;left:806px;width:117px"><b>2</b><b>0</b><b>1</b><b>0</b>年<b>−</b><b>2</b><b>0</b><b>1</b><b>4</b>年</div>
<div class="c l clip" style="top:523px;left:924px;width:103px">乌鲁木齐市</div>
<div class="c l" style="top:523px;left:1028px;width:200px">新疆维吾尔自治区</div>
<div class="rh" style="top:541px">596927</div>
<div class="c l clip" style="top:541px;left:56px;width:177px">志军老兵宾馆</div>
<div class="c r clip" style="top:541px;left:234px;width:140px"><b>8</b><b>7</b><b>.</b><b>6</b><b>3</b><b>9</b><b>9</b><b>7</b><b>2</b></div>
<div class="c r clip" style="top:541px;left:375px;width:128px"><b>4</b><b>3</b><b>.</b><b>9</b><b>5</b><b>0</b><b>9</b><b>2</b><b>3</b></div>
<div class="c l clip" style="top:541px;left:504px;width:93px"><b>2</b>星级</div>
<div class="c l clip" style="top:541px;left:598px;width:207px">新疆维吾尔自治区乌鲁木齐市米</div>
<div class="c l clip" style="top:541px;left:806px;width:117px"><b>2</b><b>0</b><b>1</b><b>0</b>年<b>−</b><b>2</b><b>0</b><b>1</b><b>4</b>年</div>
<div class="c l clip" style="top:541px;left:924px;width:103px">乌鲁木齐市</div>
<div class="c l" style="top:541px;left:1028px;width:200px">新疆维吾尔自治区</div>
<div class="rh" style="top:559px">596928</div>
<div class="c l clip" style="top:559px;left:56px;width:177px">新华顺快捷宾馆</div>
<div class="c r clip" style="top:559px;left:234px;width:140px"><b>8</b><b>7</b><b>.</b><b>6</b><b>2</b><b>9</b><b>5</b><b>9</b><b>1</b></div>
<div class="c r clip" style="top:559px;left:375px;width:128px"><b>4</b><b>3</b><b>.</b><b>9</b><b>1</b><b>5</b><b>9</b><b>8</b><b>1</b></div>
<div class="c l clip" style="top:559px;left:504px;width:93px"><b>2</b>星级</div>
<div class="c l clip" style="top:559px;left:598px;width:207px">新疆维吾尔自治区乌鲁木齐市米</div>
<div class="c l clip" style="top:559px;left:806px;width:117px"><b>2</b><b>0</b><b>1</b><b>5</b>年<b>−</b><b>2</b><b>0</b><b>1</b><b>9</b>年</div>
<div class="c l clip" style="top:559px;left:924px;width:103px">乌鲁木齐市</div>
<div class="c l" style="top:559px;left:1028px;width:200px">新疆维吾尔自治区</div>
<div class="rh" style="top:577px">596929</div>
<div class="c l clip" style="top:577px;left:56px;width:177px">建军宾馆</div>
<div class="c r clip" style="top:577px;left:234px;width:140px"><b>8</b><b>7</b><b>.</b><b>6</b><b>4</b><b>6</b><b>8</b><b>6</b><b>8</b></div>
<div class="c r clip" style="top:577px;left:375px;width:128px"><b>4</b><b>3</b><b>.</b><b>9</b><b>6</b><b>3</b><b>5</b><b>9</b></div>
<div class="c l clip" style="top:577px;left:504px;width:93px"><b>2</b>星级</div>
<div class="c l clip" style="top:577px;left:598px;width:207px">新疆维吾尔自治区乌鲁木齐市米</div>
<div class="c l clip" style="top:577px;left:806px;width:117px"><b>2</b><b>0</b><b>1</b><b>0</b>年<b>−</b><b>2</b><b>0</b><b>1</b><b>4</b>年</div>
<div class="c l clip" style="top:577px;left:924px;width:103px">乌鲁木齐市</div>
<div class="c l" style="top:577px;left:1028px;width:200px">新疆维吾尔自治区</div>
<div class="rh" style="top:595px">596930</div>
<div class="c l clip" style="top:595px;left:56px;width:177px">富源快捷宾馆</div>
<div class="c r clip" style="top:595px;left:234px;width:140px"><b>8</b><b>7</b><b>.</b><b>6</b><b>5</b><b>4</b><b>2</b><b>9</b><b>2</b></div>
<div class="c r clip" style="top:595px;left:375px;width:128px"><b>4</b><b>3</b><b>.</b><b>9</b><b>6</b><b>3</b><b>2</b><b>2</b><b>3</b></div>
<div class="c l clip" style="top:595px;left:504px;width:93px"><b>2</b>星级</div>
<div class="c l clip" style="top:595px;left:598px;width:207px">新疆维吾尔自治区乌鲁木齐市米</div>
<div class="c l clip" style="top:595px;left:806px;width:117px"><b>2</b><b>0</b><b>1</b><b>0</b>年<b>−</b><b>2</b><b>0</b><b>1</b><b>4</b>年</div>
<div class="c l clip" style="top:595px;left:924px;width:103px">乌鲁木齐市</div>
<div class="c l" style="top:595px;left:1028px;width:200px">新疆维吾尔自治区</div>
<div class="rh" style="top:613px">596931</div>
<div class="c l clip" style="top:613px;left:56px;width:177px">南山庄园酒店</div>
<div class="c r clip" style="top:613px;left:234px;width:140px"><b>8</b><b>7</b><b>.</b><b>4</b><b>0</b><b>6</b><b>2</b><b>1</b><b>7</b></div>
<div class="c r clip" style="top:613px;left:375px;width:128px"><b>4</b><b>3</b><b>.</b><b>4</b><b>6</b><b>8</b><b>7</b><b>9</b><b>7</b></div>
<div class="c l clip" style="top:613px;left:504px;width:93px"><b>5</b>星级</div>
<div class="c l clip" style="top:613px;left:598px;width:207px">新疆维吾尔自治区乌鲁木齐市乌</div>
<div class="c l clip" style="top:613px;left:806px;width:117px"><b>2</b><b>0</b><b>1</b><b>0</b>年<b>−</b><b>2</b><b>0</b><b>1</b><b>4</b>年</div>
<div class="c l clip" style="top:613px;left:924px;width:103px">乌鲁木齐市</div>
<div class="c l" style="top:613px;left:1028px;width:200px">新疆维吾尔自治区</div>
<div class="rh" style="top:631px">596932</div>
<div class="c l clip" style="top:631px;left:56px;width:177px"><b>U</b>酒店</div>
<div class="c r clip" style="top:631px;left:234px;width:140px"><b>8</b><b>7</b><b>.</b><b>4</b><b>7</b><b>5</b><b>3</b><b>5</b><b>4</b></div>
<div class="c r clip" style="top:631px;left:375px;width:128px"><b>4</b><b>3</b><b>.</b><b>5</b><b>0</b><b>4</b><b>5</b><b>4</b><b>3</b></div>
<div class="c l clip" style="top:631px;left:504px;width:93px"><b>2</b>星级</div>
<div class="c l clip" style="top:631px;left:598px;width:207px">新疆维吾尔自治区乌鲁木齐市乌</div>
<div class="c l clip" style="top:631px;left:806px;width:117px"><b>2</b><b>0</b><b>1</b><b>5</b>年<b>−</b><b>2</b><b>0</b><b>1</b><b>9</b>年</div>
<div class="c l clip" style="top:631px;left:924px;width:103px">乌鲁木齐市</div>
<div class="c l" style="top:631px;left:1028px;width:200px">新疆维吾尔自治区</div>
<div class="rh" style="top:649px">596933</div>
<div class="c l clip" style="top:649px;left:56px;width:177px">微光角落精品客栈</div>
<div class="c r clip" style="top:649px;left:234px;width:140px"><b>8</b><b>7</b><b>.</b><b>4</b><b>5</b><b>4</b><b>8</b><b>1</b><b>7</b></div>
<div class="c r clip" style="top:649px;left:375px;width:128px"><b>4</b><b>3</b><b>.</b><b>4</b><b>6</b><b>3</b><b>3</b><b>6</b><b>7</b></div>
<div class="c l clip" style="top:649px;left:504px;width:93px"><b>2</b>星级</div>
<div class="c l clip" style="top:649px;left:598px;width:207px">新疆维吾尔自治区乌鲁木齐市乌</div>
<div class="c l clip" style="top:649px;left:806px;width:117px"><b>2</b><b>0</b><b>1</b><b>5</b>年<b>−</b><b>2</b><b>0</b><b>1</b><b>9</b>年</div>
<div class="c l clip" style="top:649px;left:924px;width:103px">乌鲁木齐市</div>
<div class="c l" style="top:649px;left:1028px;width:200px">新疆维吾尔自治区</div>
<div class="rh" style="top:667px">596934</div>
<div class="c l clip" style="top:667px;left:56px;width:177px">猫窝客栈</div>
<div class="c r clip" style="top:667px;left:234px;width:140px"><b>8</b><b>7</b><b>.</b><b>4</b><b>1</b><b>6</b><b>3</b><b>5</b><b>7</b></div>
<div class="c r clip" style="top:667px;left:375px;width:128px"><b>4</b><b>3</b><b>.</b><b>4</b><b>4</b><b>8</b><b>3</b><b>7</b><b>2</b></div>
<div class="c l clip" style="top:667px;left:504px;width:93px"><b>2</b>星级</div>
<div class="c l clip" style="top:667px;left:598px;width:207px">新疆维吾尔自治区乌鲁木齐市乌</div>
<div class="c l clip" style="top:667px;left:806px;width:117px"><b>2</b><b>0</b><b>1</b><b>5</b>年<b>−</b><b>2</b><b>0</b><b>1</b><b>9</b>年</div>
<div class="c l clip" style="top:667px;left:924px;width:103px">乌鲁木齐市</div>
<div class="c l" style="top:667px;left:1028px;width:200px">新疆维吾尔自治区</div>
<div class="rh" style="top:685px">596935</div>
<div class="rh" style="top:703px">596936</div>
<div class="rh" style="top:721px">596937</div>
</div>
</body></html>
